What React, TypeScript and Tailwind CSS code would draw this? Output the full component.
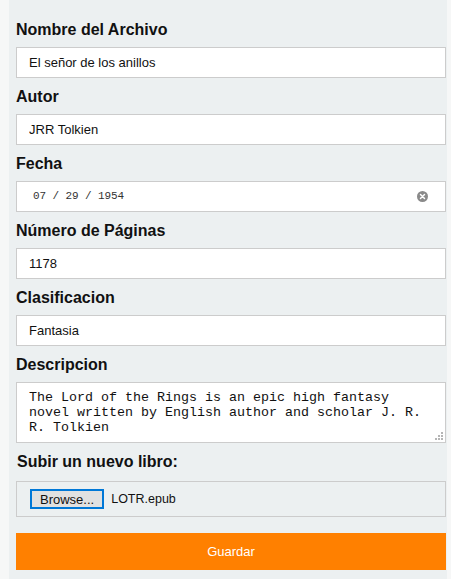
import React from 'react';

const LABEL = "block text-[16px] font-bold leading-[18px] text-[#111] font-['Liberation_Sans',Arial,sans-serif]";
const BOX = 'mt-2 flex h-[31px] w-full items-center border border-[#cccccc] bg-white px-3 text-[13px] text-[#111]';

interface FieldProps {
  label: string;
  value: string;
}

function Field({ label, value }: FieldProps) {
  return (
    <div className="mb-[10px]">
      <label className={LABEL}>{label}</label>
      <input
        type="text"
        defaultValue={value}
        className={`${BOX} outline-none font-['Liberation_Sans',Arial,sans-serif]`}
      />
    </div>
  );
}

function ClearIcon() {
  return (
    <svg width="11" height="11" viewBox="0 0 12 12" className="shrink-0">
      <circle cx="6" cy="6" r="6" fill="#8a8a8a" />
      <path d="M3.8 3.8 L8.2 8.2 M8.2 3.8 L3.8 8.2" stroke="#fff" strokeWidth="1.6" strokeLinecap="round" />
    </svg>
  );
}

function Grip() {
  return (
    <svg width="8" height="8" viewBox="0 0 8 8" className="pointer-events-none absolute bottom-[3px] right-[3px]">
      <rect x="6" y="0" width="2" height="2" fill="#b5b5b5" />
      <rect x="3" y="3" width="2" height="2" fill="#b5b5b5" />
      <rect x="6" y="3" width="2" height="2" fill="#b5b5b5" />
      <rect x="0" y="6" width="2" height="2" fill="#b5b5b5" />
      <rect x="3" y="6" width="2" height="2" fill="#b5b5b5" />
      <rect x="6" y="6" width="2" height="2" fill="#b5b5b5" />
    </svg>
  );
}

export default function App() {
  return (
    <div className="min-h-screen bg-[#f6f7f7] pl-[9px] pr-[4px] font-['Liberation_Sans',Arial,sans-serif]">
      <form className="min-h-screen bg-[#ecf0f1] pl-[7px] pr-px pt-[21px]" onSubmit={(e) => e.preventDefault()}>
        <Field label="Nombre del Archivo" value="El señor de los anillos" />
        <Field label="Autor" value="JRR Tolkien" />

        {/* Fecha */}
        <div className="mb-[10px]">
          <label className={LABEL}>Fecha</label>
          <div className={`${BOX} justify-between pr-[17px]`}>
            <span className="pl-1 font-['Liberation_Mono',monospace] text-[11px] tracking-[-0.1px] text-[#333]">07 / 29 / 1954</span>
            <ClearIcon />
          </div>
        </div>

        <Field label="Número de Páginas" value="1178" />
        <Field label="Clasificacion" value="Fantasia" />

        {/* Descripcion */}
        <div>
          <label className={LABEL}>Descripcion</label>
          <div className="relative mt-2">
            <textarea
              defaultValue="The Lord of the Rings is an epic high fantasy novel written by English author and scholar J. R. R. Tolkien"
              className="block h-[61px] w-full resize-none overflow-hidden border border-[#cccccc] bg-white px-3 pt-[7px] font-['Liberation_Mono',monospace] text-[13.33px] leading-[15px] text-[#111] outline-none"
            />
            <Grip />
          </div>
        </div>

        {/* Archivo */}
        <label className={`${LABEL} mt-[10px] pl-px`}>Subir un nuevo libro:</label>
        <div className="mt-[10px] flex h-[36px] items-center border border-[#cccccc] pl-[13px] text-[13px] text-[#111]">
          <button
            type="button"
            className="flex h-[20px] items-center border-2 border-[#0078d7] bg-[#e1e1e1] px-[8px] text-[13px] leading-none text-[#111]"
          >
            Browse...
          </button>
          <span className="ml-[7px] text-[12.5px]">LOTR.epub</span>
        </div>

        <button
          type="submit"
          className="mt-[16px] flex h-[37px] w-full items-center justify-center bg-[#ff8000] text-[13px] text-white"
        >
          Guardar
        </button>
      </form>
    </div>
  );
}
